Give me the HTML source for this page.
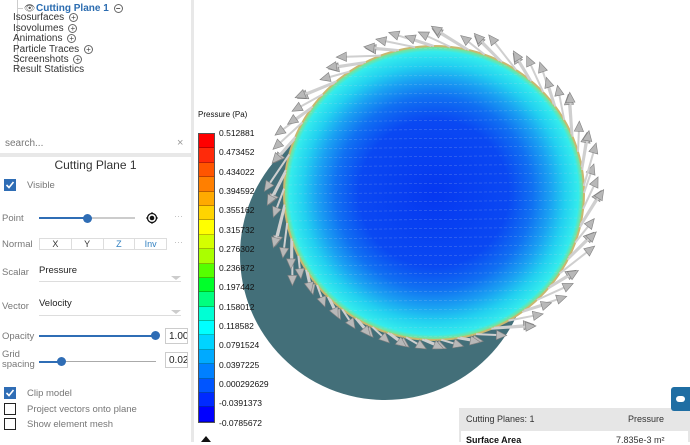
<!DOCTYPE html>
<html><head><meta charset="utf-8"><style>
*{margin:0;padding:0;box-sizing:border-box}
body{width:690px;height:442px;overflow:hidden;background:#fff;font-family:"Liberation Sans",sans-serif;position:relative;color:#333}
.a{position:absolute;white-space:nowrap}
.t{font-size:10px;color:#333;line-height:12px}
.lab{font-size:9.5px;color:#777}
.pl{display:inline-block;width:9px;height:9px;border:1px solid #666;border-radius:50%;font-size:8px;line-height:7px;text-align:center;vertical-align:middle;margin-left:2px;color:#444}
.cb{position:absolute;width:12px;height:12px;border:1.5px solid #222;background:#fff}
.cbc{background:#2f6db5;border-color:#2f6db5}
.dots{color:#bbb;font-size:9px}
.box{position:absolute;border:1px solid #ccc;background:#fff;font-size:10px;padding:2px 3px;overflow:hidden;color:#222}
</style></head><body>
<!-- tree -->
<div class="a" style="left:17px;top:0;width:1px;height:72px;background:#ccc"></div>
<div class="a" style="left:17px;top:8px;width:6px;height:1px;background:#ccc"></div>
<div class="a" style="left:24px;top:3px;font-size:9px;color:#555">👁</div>
<div class="a t" style="left:36px;top:3px;color:#2b6cb0;font-weight:bold">Cutting Plane 1 <span class="pl">−</span></div>
<div class="a t" style="left:13px;top:12px">Isosurfaces <span class="pl">+</span></div>
<div class="a t" style="left:13px;top:23px">Isovolumes <span class="pl">+</span></div>
<div class="a t" style="left:13px;top:33px">Animations <span class="pl">+</span></div>
<div class="a t" style="left:13px;top:44px">Particle Traces <span class="pl">+</span></div>
<div class="a t" style="left:13px;top:54px">Screenshots <span class="pl">+</span></div>
<div class="a t" style="left:13px;top:64px">Result Statistics</div>
<div class="a" style="left:5px;top:138px;font-size:10px;color:#777">search...</div>
<div class="a" style="left:177px;top:137px;font-size:11px;color:#999">×</div>
<div class="a" style="left:0;top:153px;width:193px;height:4px;background:#e8e8e8"></div>
<div class="a" style="left:191px;top:0;width:3px;height:442px;background:#e8e8e8"></div>
<!-- panel -->
<div class="a" style="left:0;top:158px;width:191px;text-align:center;font-size:12px;color:#333">Cutting Plane 1</div>
<div class="cb cbc" style="left:4px;top:179px"><svg width="10" height="10" viewBox="0 0 10 10" style="position:absolute;left:0;top:0"><path d="M1.5 5l2.5 2.5 4.5-5.5" stroke="#fff" stroke-width="1.6" fill="none"/></svg></div>
<div class="a lab" style="left:27px;top:180px">Visible</div>
<div class="a lab" style="left:2px;top:213px">Point</div>
<div class="a" style="left:39px;top:217px;width:48px;height:2px;background:#2f6db5"></div>
<div class="a" style="left:87px;top:217px;width:48px;height:2px;background:#ccc"></div>
<div class="a" style="left:83px;top:214px;width:9px;height:9px;border-radius:50%;background:#2f6db5"></div>
<svg class="a" style="left:146px;top:212px" width="12" height="12"><circle cx="6" cy="6" r="4.5" stroke="#111" stroke-width="1.3" fill="none"/><circle cx="6" cy="6" r="2.3" fill="#111"/><path d="M6 0v2M6 10v2M0 6h2M10 6h2" stroke="#111"/></svg>
<div class="a dots" style="left:174px;top:211px">···</div>
<div class="a lab" style="left:2px;top:239px">Normal</div>
<div class="a" style="left:39px;top:238px;width:128px;height:12px;border:1px solid #ddd;display:flex;font-size:9px">
<div style="flex:1;text-align:center;border-right:1px solid #ddd">X</div><div style="flex:1;text-align:center;border-right:1px solid #ddd">Y</div><div style="flex:1;text-align:center;border-right:1px solid #ddd;color:#2f7fc0">Z</div><div style="flex:1;text-align:center;color:#2f7fc0">Inv</div></div>
<div class="a dots" style="left:174px;top:237px">···</div>
<div class="a lab" style="left:2px;top:267px">Scalar</div>
<div class="a" style="left:39px;top:265px;font-size:9.5px;color:#222">Pressure</div>
<div class="a" style="left:39px;top:281px;width:142px;height:1px;background:#ddd"></div>
<div class="a" style="left:171px;top:276px;border-left:5px solid transparent;border-right:5px solid transparent;border-top:4px solid #ccc"></div>
<div class="a lab" style="left:2px;top:301px">Vector</div>
<div class="a" style="left:39px;top:298px;font-size:9.5px;color:#222">Velocity</div>
<div class="a" style="left:39px;top:315px;width:142px;height:1px;background:#ddd"></div>
<div class="a" style="left:171px;top:310px;border-left:5px solid transparent;border-right:5px solid transparent;border-top:4px solid #ccc"></div>
<div class="a lab" style="left:2px;top:331px">Opacity</div>
<div class="a" style="left:39px;top:335px;width:117px;height:2px;background:#2f6db5"></div>
<div class="a" style="left:151px;top:331px;width:9px;height:9px;border-radius:50%;background:#2f6db5"></div>
<div class="box" style="left:165px;top:328px;width:23px;height:16px">1.00</div>
<div class="a lab" style="left:2px;top:350px;line-height:10px">Grid<br>spacing</div>
<div class="a" style="left:39px;top:361px;width:22px;height:2px;background:#2f6db5"></div>
<div class="a" style="left:61px;top:361px;width:95px;height:1px;background:#aaa"></div>
<div class="a" style="left:57px;top:357px;width:9px;height:9px;border-radius:50%;background:#2f6db5"></div>
<div class="box" style="left:165px;top:352px;width:23px;height:16px">0.020</div>
<div class="cb cbc" style="left:4px;top:387px"><svg width="10" height="10" viewBox="0 0 10 10" style="position:absolute;left:0;top:0"><path d="M1.5 5l2.5 2.5 4.5-5.5" stroke="#fff" stroke-width="1.6" fill="none"/></svg></div>
<div class="a lab" style="left:27px;top:388px">Clip model</div>
<div class="cb" style="left:4px;top:403px"></div>
<div class="a lab" style="left:27px;top:404px">Project vectors onto plane</div>
<div class="cb" style="left:4px;top:418px"></div>
<div class="a lab" style="left:27px;top:419px">Show element mesh</div>

<!-- viewport -->
<svg class="a" id="v" style="left:0;top:0" width="690" height="442">
<defs>
<radialGradient id="g" cx="0.5" cy="0.5" r="0.5">
<stop offset="0" stop-color="#0638f0"/><stop offset="0.5" stop-color="#0a48f2"/><stop offset="0.66" stop-color="#1070f2"/><stop offset="0.78" stop-color="#1aa0f2"/><stop offset="0.88" stop-color="#22d0f0"/><stop offset="0.97" stop-color="#34ecec"/><stop offset="1" stop-color="#80e090"/>
</radialGradient>
<clipPath id="cc"><ellipse cx="434" cy="193" rx="149" ry="146"/></clipPath>
</defs>
<circle cx="385" cy="255" r="145" fill="#436f79"/>
<ellipse cx="434" cy="193" rx="151" ry="148" fill="#c8b870"/>
<ellipse cx="434" cy="193" rx="149" ry="146" fill="url(#g)"/>
<g id="stripes" clip-path="url(#cc)" stroke="#c9d6e8" stroke-width="0.6" opacity="0.3"></g>
<g id="arr"></g>
</svg>

<!-- colorbar -->
<div class="a" style="left:198px;top:110px;font-size:8px;color:#111">Pressure (Pa)</div>
<div class="a" id="cbar" style="left:198px;top:133px;width:17px;height:290px;border:1px solid #555"></div>
<div id="lbls"></div>
<div class="a" style="left:201px;top:436px;border-left:5px solid transparent;border-right:5px solid transparent;border-bottom:6px solid #111"></div>

<!-- stats -->
<div class="a" style="left:459px;top:408px;width:231px;height:34px;background:#e6e6e6"></div>
<div class="a" style="left:466px;top:414px;font-size:9px;color:#333">Cutting Planes: 1</div>
<div class="a" style="left:628px;top:414px;font-size:9px;color:#333">Pressure</div>
<div class="a" style="left:461px;top:431px;width:227px;height:11px;background:#fff"></div>
<div class="a" style="left:466px;top:435px;font-size:9px;font-weight:bold;color:#111">Surface Area</div>
<div class="a" style="left:616px;top:435px;font-size:9px;color:#333">7.835e-3 m²</div>
<div class="a" style="left:671px;top:387px;width:19px;height:24px;background:#1f6ea3;border-radius:3px 0 0 3px"><div style="position:absolute;left:5px;top:9px;width:9px;height:6px;background:#fff;border-radius:3px"></div></div>

<script>
var cols=["#ff0000","#ff2a0a","#ff5500","#ff7f00","#ffaa00","#ffd400","#ffff00","#d4ff00","#aaff00","#55ff00","#00ff2a","#00ff7f","#00ffd4","#00ffff","#00d4ff","#00aaff","#0080ff","#0055ff","#002aff","#0000ff"];
var bar=document.getElementById('cbar'),h='';
for(var i=0;i<cols.length;i++)h+='<div style="height:14.4px;background:'+cols[i]+';border-bottom:1px solid rgba(0,0,0,.25)"></div>';
bar.innerHTML=h;
var L=["0.512881","0.473452","0.434022","0.394592","0.355162","0.315732","0.276302","0.236872","0.197442","0.158012","0.118582","0.0791524","0.0397225","0.000292629","-0.0391373","-0.0785672"],s='';
for(i=0;i<L.length;i++)s+='<div class="a" style="left:219px;top:'+(128+i*19.3)+'px;font-size:8.5px;color:#111">'+L[i]+'</div>';
document.getElementById('lbls').innerHTML=s;
var ns='http://www.w3.org/2000/svg',st=document.getElementById('stripes');
for(var y=50;y<340;y+=9){var l=document.createElementNS(ns,'line');l.setAttribute('x1',284);l.setAttribute('x2',584);l.setAttribute('y1',y);l.setAttribute('y2',y-3);l.setAttribute('stroke-dasharray','3 2');st.appendChild(l);}
var ar=document.getElementById('arr'),cx=434,cy=193;
for(var k=0;k<80;k++){var a=k/80*Math.PI*2+0.03*(k%3);var rx=150,ry=147;var x=cx+rx*Math.cos(a),y2=cy+ry*Math.sin(a);
var len=22+ (k%4)*5;
if(Math.cos(a)<0.2&&Math.sin(a)>0.4)len=14;
var tx=Math.sin(a),ty=-Math.cos(a);
var dx=tx*0.88+Math.cos(a)*0.3,dy=ty*0.88+Math.sin(a)*0.3;
var ex=x+dx*len,ey=y2+dy*len;
var ln=document.createElementNS(ns,'line');ln.setAttribute('x1',x);ln.setAttribute('y1',y2);ln.setAttribute('x2',ex);ln.setAttribute('y2',ey);ln.setAttribute('stroke','#cfcfcf');ln.setAttribute('stroke-width','2');ar.appendChild(ln);
var px=-dy,py=dx,hx=ex+dx*11,hy=ey+dy*11;
var p=document.createElementNS(ns,'polygon');p.setAttribute('points',hx+','+hy+' '+(ex+px*5)+','+(ey+py*5)+' '+(ex-px*5)+','+(ey-py*5));p.setAttribute('fill','#b8b8b8');p.setAttribute('stroke','#808080');p.setAttribute('stroke-width','0.6');ar.appendChild(p);}
</script>
</body></html>
